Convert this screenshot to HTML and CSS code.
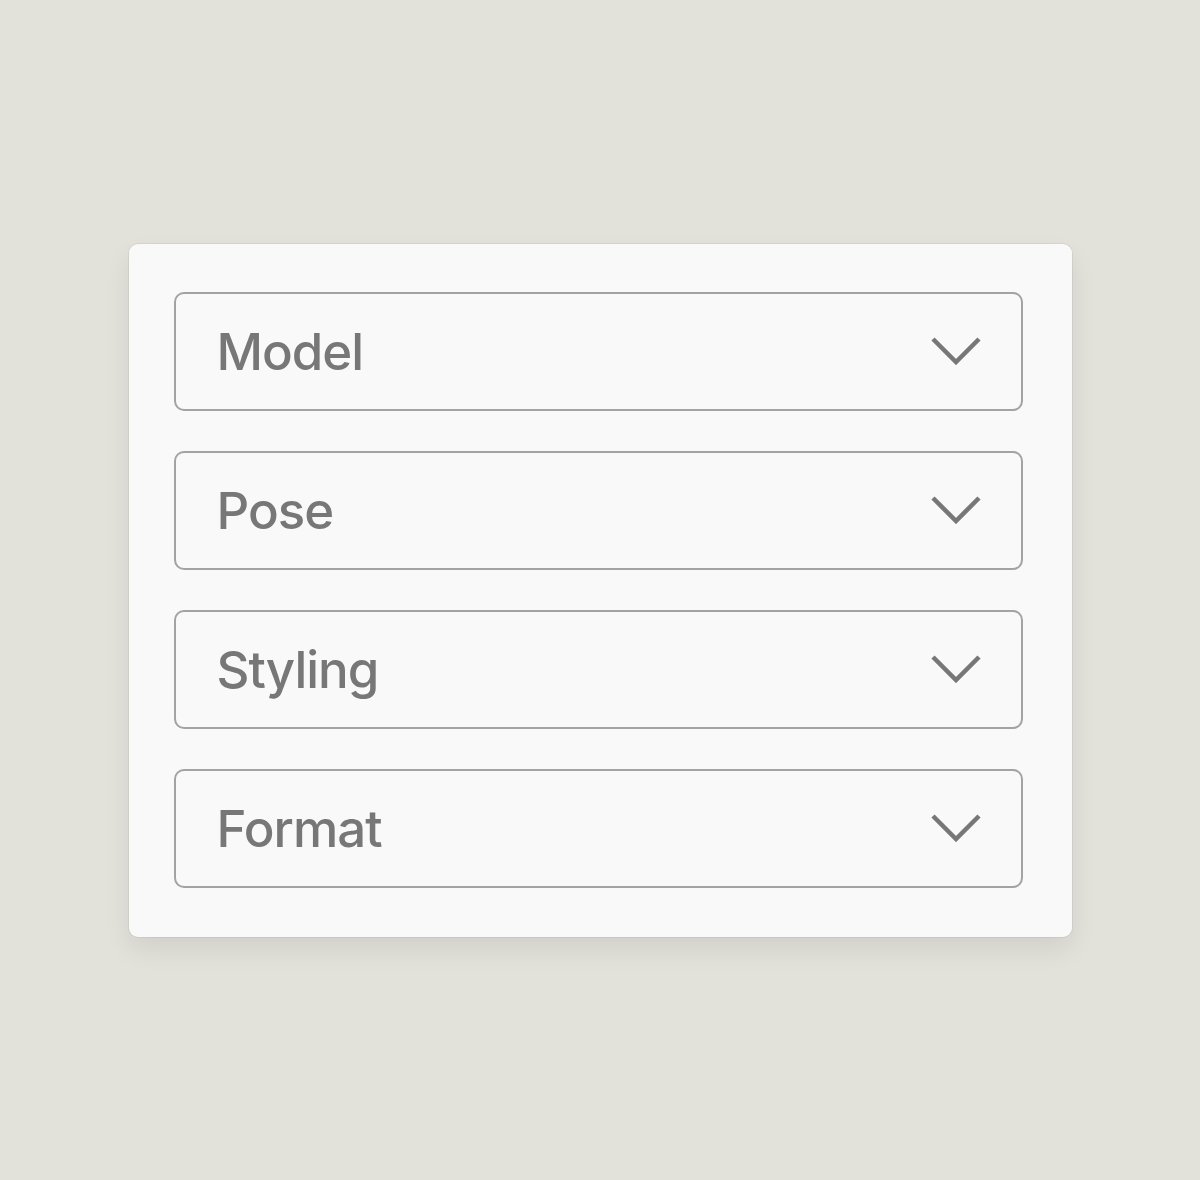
FILE: index.html
```html
<!DOCTYPE html>
<html lang="en">
<head>
<meta charset="utf-8">
<title>Options</title>
<link rel="stylesheet" href="styles.css">
</head>
<body>
<main class="page">
  <section class="card">
    <div class="select"><span class="label">Model</span><svg class="chev" viewBox="0 0 50 28"><polyline points="2,2 25,25 48,2"/></svg></div>
    <div class="select"><span class="label">Pose</span><svg class="chev" viewBox="0 0 50 28"><polyline points="2,2 25,25 48,2"/></svg></div>
    <div class="select"><span class="label">Styling</span><svg class="chev" viewBox="0 0 50 28"><polyline points="2,2 25,25 48,2"/></svg></div>
    <div class="select"><span class="label">Format</span><svg class="chev" viewBox="0 0 50 28"><polyline points="2,2 25,25 48,2"/></svg></div>
  </section>
</main>
</body>
</html>
```
FILE: styles.css
```css
html, body {
  margin: 0;
  padding: 0;
  background: #e2e1da;
}
.page {
  min-height: 1180px;
  display: flex;
  align-items: center;
  justify-content: center;
  font-family: Inter, "Liberation Sans", Arial, sans-serif;
}
.card {
  width: 943px;
  box-sizing: border-box;
  padding: 48px 49px 49px 45px;
  background: #f9f9f9;
  border-radius: 9px;
  box-shadow: 0 0 0 1px rgba(0,0,0,0.05), 0 12px 26px rgba(0,0,0,0.08);
  display: flex;
  flex-direction: column;
  gap: 40px;
}
.select {
  height: 119px;
  box-sizing: border-box;
  border: 2px solid #a3a3a3;
  border-radius: 10px;
  display: flex;
  align-items: center;
  justify-content: space-between;
  padding: 0 40px 0 41px;
}
.label {
  font-size: 51px;
  font-weight: 500;
  letter-spacing: -1px;
  color: #777777;
  line-height: 1;
}
.chev {
  width: 50px;
  height: 28px;
  fill: none;
  stroke: #777777;
  stroke-width: 4.5;
}
```
